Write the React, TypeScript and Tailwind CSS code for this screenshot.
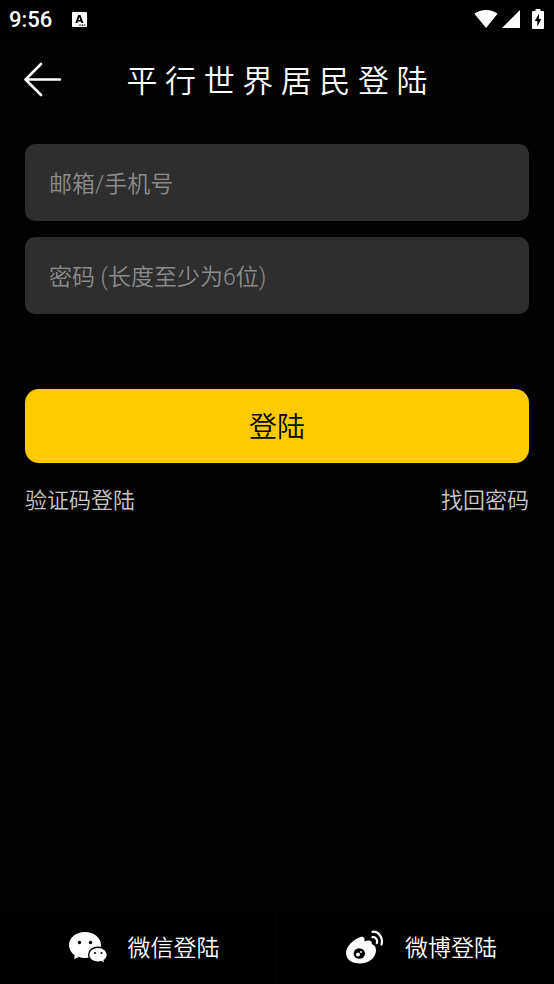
import { useState } from "react";

const FONT = "font-[Roboto,'Noto_Sans_CJK_SC',sans-serif]";

function StatusBar() {
  return (
    <div className="flex h-[38px] items-center justify-between bg-black pl-[9px] pr-[10px]">
      <div className="flex items-center gap-5">
        <span className="pt-0.5 text-[22px] font-medium leading-6">9:56</span>
        <svg className="h-[15px] w-[15px]" viewBox="0 0 15 15" aria-hidden="true">
          <rect width="15" height="15" rx="1" fill="#fff" />
          <path fillRule="evenodd" d="M3.300 11 6.200 3h2.300l2.900 8H9.300l-.5-1.600H5.900L5.400 11ZM6.400 7.900h1.900L7.350 5Z" fill="#000" />
          <path d="M7.300 13.200h1.400M9.600 13.200h1.400M11.900 13.200h1.400" stroke="#000" strokeWidth="1.300" />
        </svg>
      </div>
      <div className="flex items-center" aria-hidden="true">
        <svg className="h-5 w-6" viewBox="0 0 24 20" fill="#fff">
          <path d="M12 19 .4 4.800C3.400 2.300 7.500 1 12 1s8.600 1.300 11.600 3.800Z" />
        </svg>
        <svg className="ml-1 h-[18px] w-[18px]" viewBox="0 0 18 18" fill="#fff">
          <path d="M18 0v18H0Z" />
        </svg>
        <svg className="ml-3 h-5 w-3" viewBox="0 0 12 20">
          <path d="M3.500 0h5v2H11a1 1 0 0 1 1 1v16a1 1 0 0 1-1 1H1a1 1 0 0 1-1-1V3a1 1 0 0 1 1-1h2.500Z" fill="#fff" />
          <path d="M7 4.500 2.800 12h2.500v5.500L9.300 10H7Z" fill="#000" />
        </svg>
      </div>
    </div>
  );
}

function WechatIcon() {
  return (
    <svg className="h-8 w-[38px]" viewBox="0 0 38 32" aria-hidden="true">
      <path d="M16 1C7 1 0 6.800 0 14c0 4.200 2.200 7.900 5.700 10.300L5 28l5-1.900c1.900.6 3.900.9 6 .9 9 0 16-5.800 16-13S25 1 16 1Z" fill="#fff" />
      <path d="M29 17c-5 0-8.600 3-8.600 6.800s3.600 6.700 8.600 6.700c1.200 0 2.300-.2 3.300-.5l2.700 1.300-.5-2.300c2-1.200 3.100-3.200 3.100-5.200 0-3.800-3.600-6.800-8.600-6.800Z" fill="#fff" stroke="#000" strokeWidth="3" paintOrder="stroke" />
      <circle cx="10.500" cy="11.500" r="1.700" />
      <circle cx="21.500" cy="11.500" r="1.700" />
      <circle cx="26" cy="22" r="1.100" />
      <circle cx="32.500" cy="22" r="1.100" />
    </svg>
  );
}

function WeiboIcon() {
  return (
    <svg className="h-[34px] w-[38px]" viewBox="0 0 38 34" aria-hidden="true">
      <path d="M14 7.200c3-1.200 5.500.3 4.300 4.200 3.700-1.500 8.600-1.300 7.300 2.700 3 1 4.400 3 4.400 6C30 28 23 33.500 13.500 33.500 6 33.500 0 29.500 0 23 0 16 8 9 14 7.200Z" fill="#fff" />
      <ellipse cx="13.300" cy="23.500" rx="5.700" ry="5.200" />
      <circle cx="12" cy="24.600" r="2" fill="#fff" />
      <circle cx="15" cy="22" r="1" fill="#fff" />
      <path d="M26.500 1.800c6-.8 11 6 9 12.700M26.500 7.200c3.500-.4 5.400 2.700 4.300 6" fill="none" stroke="#fff" strokeWidth="2.200" strokeLinecap="round" />
    </svg>
  );
}

const fieldClass =
  "block h-[77px] w-full rounded-[10px] bg-[#2e2e2e] px-6 pt-[3px] text-[23px] text-white outline-none placeholder:text-[#8c8c8c]";

const socialClass = "flex h-[74px] items-center justify-center gap-[21px] pl-3 text-[23px]";

export default function App() {
  const [account, setAccount] = useState("");
  const [password, setPassword] = useState("");

  return (
    <div className={`flex min-h-screen flex-col bg-[#020202] font-[350] text-white ${FONT}`}>
      <StatusBar />
      <header className="grid grid-cols-[1fr_auto_1fr] items-center px-6 pt-4">
        <button type="button" aria-label="返回" className="w-10">
          <svg className="h-12 w-10" viewBox="0 0 40 48" fill="none" stroke="#fff" strokeWidth="2.600" strokeLinecap="round" strokeLinejoin="round">
            <path d="M36 23.500H1.500M17 8 1.500 23.500 17 39" />
          </svg>
        </button>
        <h1 className="pt-1 text-[31px] leading-[48px]">平 行 世 界 居 民 登 陆</h1>
      </header>

      <main className="flex grow flex-col px-[25px] pt-[38px]">
        <form onSubmit={(event) => event.preventDefault()}>
          <input className={fieldClass} type="text" aria-label="邮箱/手机号" placeholder="邮箱/手机号" value={account} onChange={(event) => setAccount(event.target.value)} />
          <input className={`mt-4 ${fieldClass}`} type="password" aria-label="密码" placeholder="密码 (长度至少为6位)" value={password} onChange={(event) => setPassword(event.target.value)} />
          <button type="submit" className="mt-[75px] h-[74px] w-full rounded-[14px] bg-[#ffca00] pt-1 text-[28px] text-black">
            登陆
          </button>
        </form>
        <div className="mt-[22px] flex justify-between text-[22px] leading-8 text-[#c8c8c8]">
          <a href="#code">验证码登陆</a>
          <a href="#reset">找回密码</a>
        </div>
      </main>

      <footer className="grid grid-cols-2 divide-x divide-[#040404] bg-black">
        <button type="button" className={socialClass}>
          <WechatIcon />
          <span className="pt-1">微信登陆</span>
        </button>
        <button type="button" className={socialClass}>
          <WeiboIcon />
          <span className="pt-1">微博登陆</span>
        </button>
      </footer>
    </div>
  );
}
